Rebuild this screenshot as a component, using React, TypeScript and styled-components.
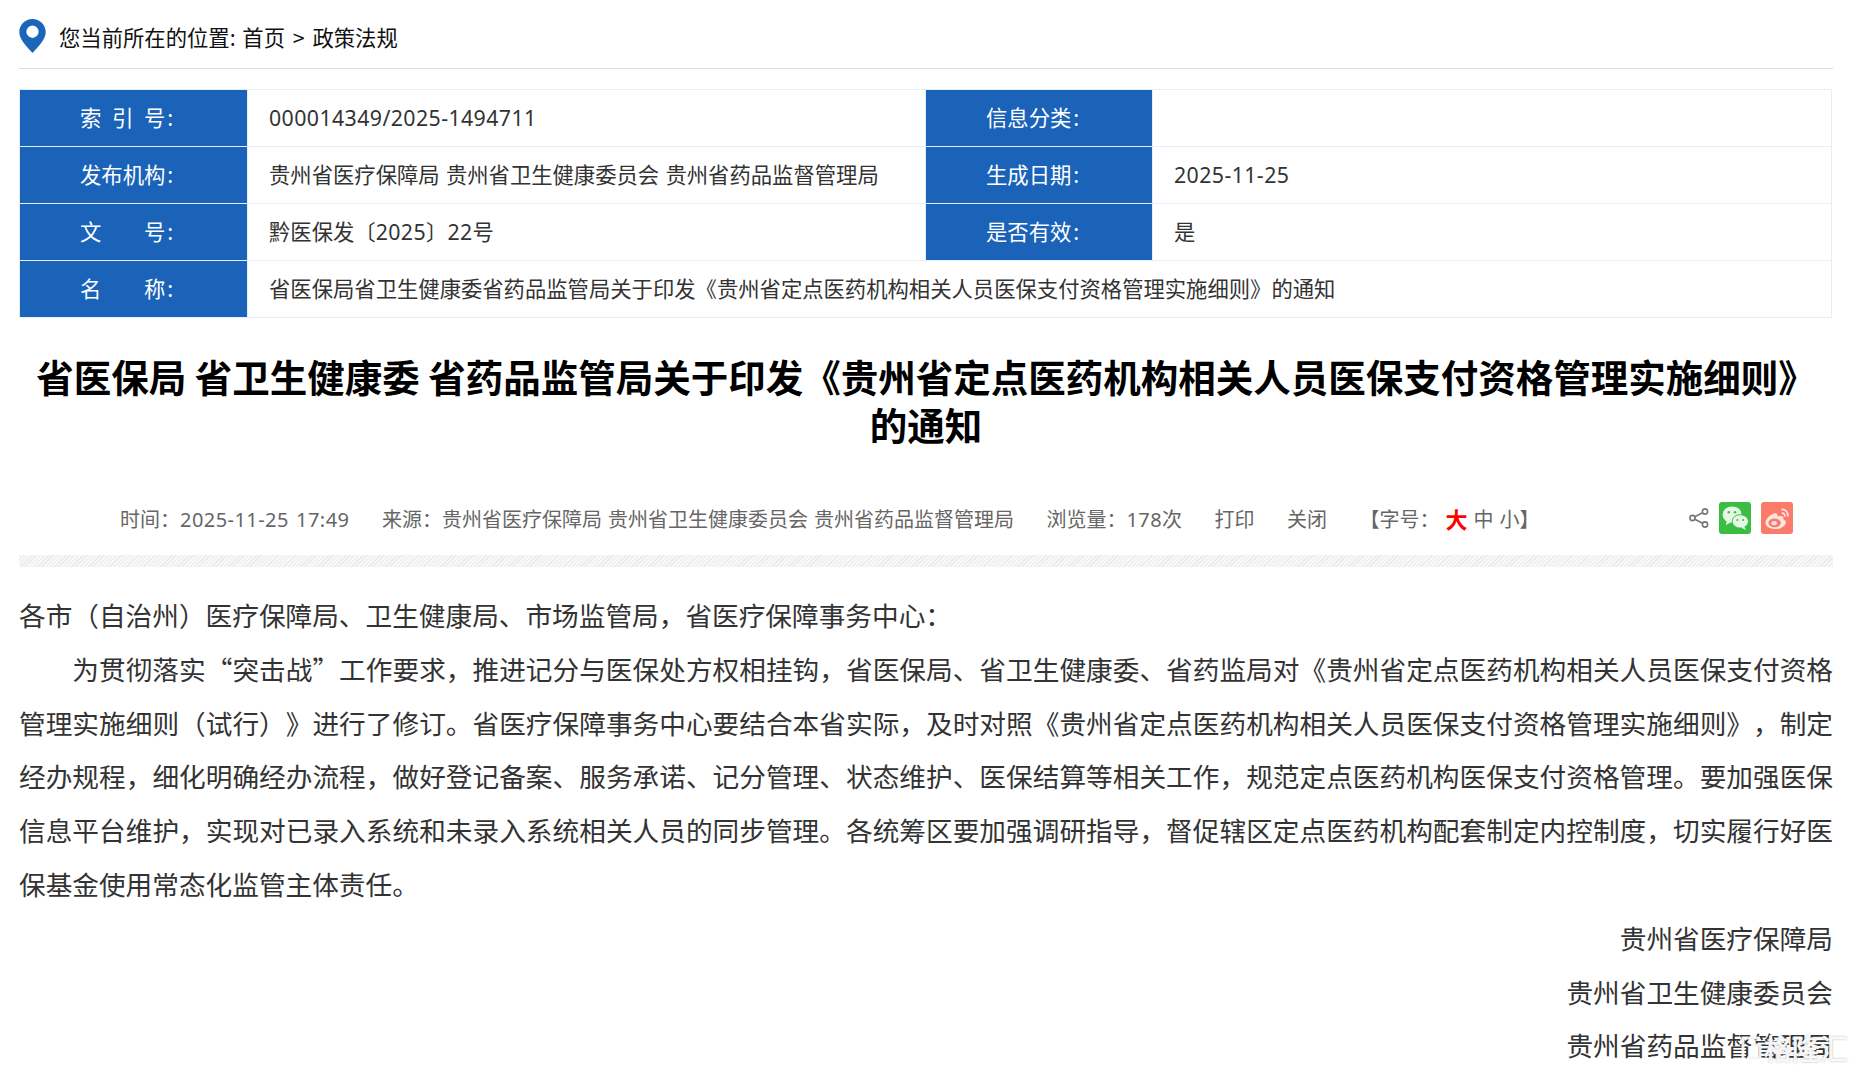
import React from 'react';
import styled, { createGlobalStyle } from 'styled-components';

const GlobalStyle = createGlobalStyle`
  html, body {
    margin: 0;
    padding: 0;
    height: 1074px;
    overflow: hidden;
    background: #fff;
  }
  body {
    font-family: "Noto Sans CJK SC", "Noto Sans", sans-serif;
    color: #333;
    text-spacing-trim: space-all;
  }
`;

const Page = styled.div`
  position: relative;
  padding: 0 23px 0 19px;
  height: 1074px;
  overflow: hidden;
`;

const Breadcrumb = styled.div`
  height: 64px;
  padding-top: 4px;
  display: flex;
  align-items: center;
  gap: 13px;
  font-size: 21.33px;
  color: #111;
  border-bottom: 1px solid #ddd;
`;

const CrumbHome = styled.span`
  margin-left: 2px;
`;

const CrumbSep = styled.span`
  margin: 0 3px;
`;

const InfoTable = styled.table`
  width: 1813px;
  margin-top: 20px;
  border-collapse: collapse;
  table-layout: fixed;
  font-size: 21.33px;
`;

const Th = styled.th`
  height: 57px;
  padding: 0 0 4px 60px;
  box-sizing: border-box;
  background: #1a63b8;
  color: #fff;
  font-weight: 400;
  text-align: left;
  border: 1px solid #e3eefa;
  white-space: pre;
`;

const Colon = styled.span`
  margin-left: 2px;
`;

const Td = styled.td`
  height: 57px;
  padding: 0 0 4px 21px;
  box-sizing: border-box;
  color: #333;
  border: 1px solid #e3eefa;
  word-spacing: 1.5px;
`;

const Digits = styled.span<{ $spacing: string }>`
  font-family: "Noto Sans", "Noto Sans CJK SC", sans-serif;
  letter-spacing: ${p => p.$spacing};
`;

const Title = styled.h1`
  margin: 34px 0 0;
  padding: 0 10px;
  font-size: 37.5px;
  line-height: 48px;
  font-weight: 700;
  color: #000;
  text-align: center;
`;

const MetaRow = styled.div`
  display: flex;
  align-items: center;
  height: 32px;
  margin-top: 54px;
  padding: 0 40px 0 101px;
  font-size: 20px;
  color: #666;
  gap: 32.5px;
  word-spacing: 1.5px;
`;

const FontSizes = styled.span`
  display: flex;
  align-items: center;
`;

const SizeOption = styled.span<{ $active?: boolean }>`
  margin-left: 6px;
  font-size: ${p => (p.$active ? '22px' : '20px')};
  color: ${p => (p.$active ? '#f00' : '#666')};
  font-weight: ${p => (p.$active ? 700 : 400)};
`;

const ShareIcons = styled.div`
  margin-left: auto;
  display: flex;
  align-items: center;
  gap: 10px;
`;

const ShareButton = styled.span<{ $bg: string }>`
  width: 32px;
  height: 32px;
  border-radius: 3px;
  background: ${p => p.$bg};
  display: flex;
  align-items: center;
  justify-content: center;
`;

const Stripe = styled.div`
  height: 12px;
  margin-top: 21px;
  background: repeating-linear-gradient(135deg, #eaeaea 0 1px, #f8f8f8 1px 3px);
`;

const Article = styled.div`
  margin-top: 21px;
  font-size: 26.67px;
  line-height: 53.8px;
  color: #333;
`;

const Paragraph = styled.p<{ $indent?: boolean; $right?: boolean }>`
  margin: 0;
  text-indent: ${p => (p.$indent ? '2em' : '0')};
  text-align: ${p => (p.$right ? 'right' : 'justify')};
`;

const Watermark = styled.div`
  position: absolute;
  right: 8px;
  bottom: 11px;
  display: flex;
  align-items: center;
  gap: 2px;
  font-size: 28px;
  line-height: 30px;
  color: rgba(250, 250, 250, 0.95);
  -webkit-text-stroke: 1px rgba(255, 255, 255, 0.9);
  text-shadow: 0 0 2px rgba(60, 60, 60, 0.8);
`;

const PinIcon = () => (
  <svg width="27" height="34" viewBox="0 0 28 36">
    <path
      d="M14 0C6.3 0 0 6.200 0 13.800c0 4.200 2 7.600 4.400 11.100C7.300 29 11 32.600 14 36c3-3.400 6.700-7 9.600-11.100C26 21.400 28 18 28 13.800 28 6.200 21.700 0 14 0z"
      fill="#1b66b9"
    />
    <circle cx="14" cy="13.500" r="6.500" fill="#fff" />
  </svg>
);

const ShareIcon = () => (
  <svg width="20" height="20" viewBox="0 0 20 20" fill="none" stroke="#777" strokeWidth="1.600">
    <circle cx="3.500" cy="10" r="2.600" />
    <circle cx="16" cy="3.500" r="2.600" />
    <circle cx="16" cy="16.500" r="2.600" />
    <path d="M5.800 8.800 13.700 4.700M5.800 11.200l7.900 4.100" />
  </svg>
);

const WechatIcon = () => (
  <svg width="27" height="25" viewBox="0 0 28 26">
    <ellipse cx="10.500" cy="9" rx="10" ry="8.500" fill="#e6f7e8" />
    <path d="M5 15l-1 5 5-3z" fill="#e6f7e8" />
    <ellipse cx="19" cy="16" rx="8.500" ry="7" fill="#e6f7e8" stroke="#3abd43" strokeWidth="1" />
    <path d="M23 21l2 4-5-2.500z" fill="#e6f7e8" />
    <circle cx="7" cy="6.500" r="1.300" fill="#3abd43" />
    <circle cx="13.500" cy="6.500" r="1.300" fill="#3abd43" />
    <circle cx="16" cy="14.500" r="1.100" fill="#3abd43" />
    <circle cx="22" cy="14.500" r="1.100" fill="#3abd43" />
  </svg>
);

const WeiboIcon = () => (
  <svg width="27" height="25" viewBox="0 0 28 26" fill="none">
    <path
      d="M12 24C6 24 1.500 21.500 1.500 17.500 1.500 13.500 7 8 11.500 7.500c2.500-.3 3 2 2.500 3.500 3-1 6-.8 6.200 1.500 0 1 0 1.500.5 2 2 .5 2.300 2 1.800 3.500C21 22 17 24 12 24z"
      fill="#fde4df"
    />
    <ellipse cx="11" cy="17.500" rx="6.500" ry="4.500" fill="#fb7b6b" />
    <ellipse cx="10.500" cy="17.800" rx="3" ry="2.300" fill="#fde4df" />
    <path d="M18 3.500c4-.7 7.500 3 6.500 7.500M18.500 7.500c2-.4 3.500 1.400 3 3.500" stroke="#fde4df" strokeWidth="1.800" />
  </svg>
);

const App = () => {
  return (
    <Page>
      <GlobalStyle />
      <Breadcrumb>
        <PinIcon />
        <span>
          您当前所在的位置:<CrumbHome> 首页</CrumbHome>
          <CrumbSep> &gt; </CrumbSep>政策法规
        </span>
      </Breadcrumb>
      <InfoTable>
        <colgroup>
          <col style={{ width: 228 }} />
          <col style={{ width: 678 }} />
          <col style={{ width: 227 }} />
          <col />
        </colgroup>
        <tbody>
          <tr>
            <Th>{'索\u2002引\u2002号'}<Colon>:</Colon></Th>
            <Td><Digits $spacing="0.4px">000014349/2025-1494711</Digits></Td>
            <Th>信息分类<Colon>:</Colon></Th>
            <Td />
          </tr>
          <tr>
            <Th>发布机构<Colon>:</Colon></Th>
            <Td>贵州省医疗保障局 贵州省卫生健康委员会 贵州省药品监督管理局</Td>
            <Th>生成日期<Colon>:</Colon></Th>
            <Td><Digits $spacing="0.4px">2025-11-25</Digits></Td>
          </tr>
          <tr>
            <Th>{'文\u3000\u3000号'}<Colon>:</Colon></Th>
            <Td>黔医保发〔<Digits $spacing="0.4px">2025</Digits>〕<Digits $spacing="0.4px">22</Digits>号</Td>
            <Th>是否有效<Colon>:</Colon></Th>
            <Td>是</Td>
          </tr>
          <tr>
            <Th>{'名\u3000\u3000称'}<Colon>:</Colon></Th>
            <Td colSpan={3}>省医保局省卫生健康委省药品监管局关于印发《贵州省定点医药机构相关人员医保支付资格管理实施细则》的通知</Td>
          </tr>
        </tbody>
      </InfoTable>
      <Title>省医保局 省卫生健康委 省药品监管局关于印发《贵州省定点医药机构相关人员医保支付资格管理实施细则》的通知</Title>
      <MetaRow>
        <span>时间：<Digits $spacing="0.45px">2025-11-25 17:49</Digits></span>
        <span>来源：贵州省医疗保障局 贵州省卫生健康委员会 贵州省药品监督管理局</span>
        <span>浏览量：<Digits $spacing="0.45px">178</Digits>次</span>
        <span>打印</span>
        <span>关闭</span>
        <FontSizes>
          【字号：
          <SizeOption $active>大</SizeOption>
          <SizeOption>中</SizeOption>
          <SizeOption>小</SizeOption>
          】
        </FontSizes>
        <ShareIcons>
          <ShareIcon />
          <ShareButton $bg="#3abd43"><WechatIcon /></ShareButton>
          <ShareButton $bg="#fb7b6b"><WeiboIcon /></ShareButton>
        </ShareIcons>
      </MetaRow>
      <Stripe />
      <Article>
        <Paragraph>各市（自治州）医疗保障局、卫生健康局、市场监管局，省医疗保障事务中心：</Paragraph>
        <Paragraph $indent>
          为贯彻落实“突击战”工作要求，推进记分与医保处方权相挂钩，省医保局、省卫生健康委、省药监局对《贵州省定点医药机构相关人员医保支付资格管理实施细则（试行）》进行了修订。省医疗保障事务中心要结合本省实际，及时对照《贵州省定点医药机构相关人员医保支付资格管理实施细则》，制定经办规程，细化明确经办流程，做好登记备案、服务承诺、记分管理、状态维护、医保结算等相关工作，规范定点医药机构医保支付资格管理。要加强医保信息平台维护，实现对已录入系统和未录入系统相关人员的同步管理。各统筹区要加强调研指导，督促辖区定点医药机构配套制定内控制度，切实履行好医保基金使用常态化监管主体责任。
        </Paragraph>
        <Paragraph $right>贵州省医疗保障局</Paragraph>
        <Paragraph $right>贵州省卫生健康委员会</Paragraph>
        <Paragraph $right>贵州省药品监督管理局</Paragraph>
      </Article>
      <Watermark>
        <svg width="22" height="26" viewBox="0 0 22 26" fill="none" stroke="rgba(245,245,245,.95)" strokeWidth="3">
          <path d="M3 23V3h17M7 23h13V10h-8" />
        </svg>
        格隆汇
      </Watermark>
    </Page>
  );
};

export default App;
